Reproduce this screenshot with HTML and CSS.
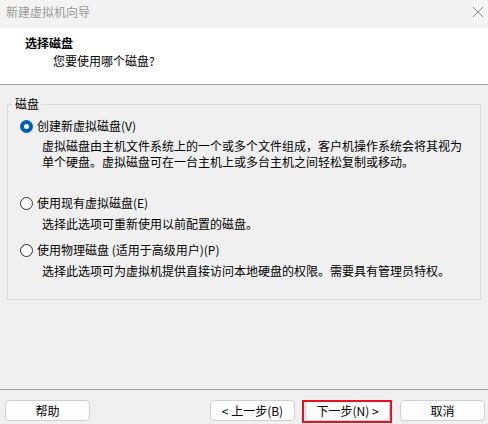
FILE: index.html
```html
<!DOCTYPE html>
<html lang="zh-CN">
<head>
<meta charset="utf-8">
<title>新建虚拟机向导</title>
<link rel="stylesheet" href="styles.css">
</head>
<body>
<div class="window">
  <div class="titlebar">
    <span class="title">新建虚拟机向导</span>
    <svg class="close" width="12" height="12" viewBox="0 0 12 12"><path d="M1 1 L11 11 M11 1 L1 11" stroke="#8a8a8a" stroke-width="1" fill="none"/></svg>
  </div>
  <div class="header">
    <div class="h-title">选择磁盘</div>
    <div class="h-sub">您要使用哪个磁盘?</div>
  </div>
  <div class="content">
    <fieldset class="group">
      <legend>磁盘</legend>
      <div class="option opt1"><span class="radio checked"></span><span>创建新虚拟磁盘(V)</span></div>
      <div class="desc desc1">虚拟磁盘由主机文件系统上的一个或多个文件组成，客户机操作系统会将其视为<br>单个硬盘。虚拟磁盘可在一台主机上或多台主机之间轻松复制或移动。</div>
      <div class="option opt2"><span class="radio"></span><span>使用现有虚拟磁盘(E)</span></div>
      <div class="desc desc2">选择此选项可重新使用以前配置的磁盘。</div>
      <div class="option opt3"><span class="radio"></span><span>使用物理磁盘 (适用于高级用户)(P)</span></div>
      <div class="desc desc3">选择此选项可为虚拟机提供直接访问本地硬盘的权限。需要具有管理员特权。</div>
    </fieldset>
  </div>
  <div class="footer">
    <button class="btn">帮助</button>
    <div class="right">
      <button class="btn">&lt; 上一步(B)</button>
      <button class="btn focused">下一步(N) &gt;</button>
      <button class="btn">取消</button>
    </div>
  </div>
</div>
</body>
</html>
```

FILE: styles.css
```css
* { box-sizing: border-box; }
html, body { margin: 0; padding: 0; }
body {
  width: 488px;
  height: 424px;
  overflow: hidden;
  background: #f0f0f0;
  font-family: "Noto Sans CJK SC", "Microsoft YaHei", sans-serif;
  font-size: 12px;
  line-height: 16px;
  color: #000;
}
.window {
  width: 488px;
  height: 424px;
  display: flex;
  flex-direction: column;
}
.titlebar {
  height: 28px;
  flex: none;
  background: #f3f3f3;
  display: flex;
  align-items: flex-start;
  justify-content: space-between;
  padding: 4px 4px 0 6px;
}
.title { color: #9a9a9a; }
.close { margin-top: 2px; }
.header {
  flex: none;
  height: 57px;
  background: #fff;
  border-bottom: 1px solid #a0a0a0;
  padding: 7px 0 0 25px;
}
.h-title { font-weight: bold; }
.h-sub { margin-top: 2px; padding-left: 28px; }
.content {
  flex: 1;
  padding: 11px 7px 0 7px;
}
.group {
  margin: 0;
  width: 474px;
  border: 1px solid #dcdcdc;
  padding: 6px 0 20px 0;
}
.group legend {
  margin-left: 5px;
  padding: 0 2px;
  line-height: 16px;
}
.option {
  display: flex;
  align-items: center;
  height: 16px;
  padding-left: 12px;
}
.radio {
  width: 13px;
  height: 13px;
  border-radius: 50%;
  border: 1px solid #333;
  background: #fff;
  margin-right: 4px;
  flex: none;
}
.radio.checked {
  border: 4px solid #005fb8;
  background: #fff;
}
.desc { padding-left: 34px; }
.desc1 { margin-top: 4px; }
.opt2 { margin-top: 25px; }
.desc2 { margin-top: 5px; }
.opt3 { margin-top: 10px; }
.desc3 { margin-top: 5px; }
.footer {
  flex: none;
  height: 35px;
  border-top: 1px solid #a0a0a0;
  display: flex;
  justify-content: space-between;
  padding: 10px 3px 0 5px;
}
.right { display: flex; gap: 10px; }
.btn {
  width: 85px;
  height: 21px;
  padding: 0;
  background: #fdfdfd;
  border: 1px solid #d0d0d0;
  border-radius: 4px;
  font-family: inherit;
  font-size: 12px;
  line-height: 16px;
  color: #000;
}
.btn.focused {
  position: relative;
}
.btn.focused::after {
  content: "";
  position: absolute;
  top: -1px;
  bottom: -3px;
  left: -4px;
  right: -3px;
  border: 2px solid #e81123;
}
```
